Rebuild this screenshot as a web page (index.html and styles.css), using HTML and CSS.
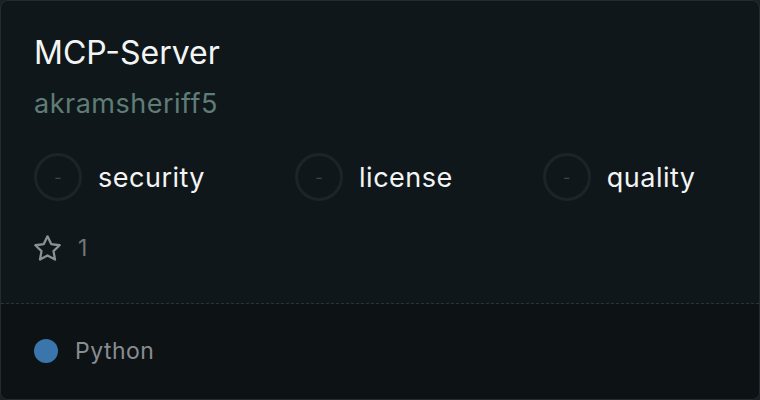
FILE: index.html
```html
<!DOCTYPE html>
<html>
<head>
<meta charset="utf-8">
<link rel="stylesheet" href="styles.css">
</head>
<body>
<div class="card">
  <div class="main">
    <div class="title">MCP-Server</div>
    <div class="owner">akramsheriff5</div>
    <div class="scores">
      <div class="score"><span class="ring">-</span><span class="label">security</span></div>
      <div class="score"><span class="ring">-</span><span class="label">license</span></div>
      <div class="score"><span class="ring">-</span><span class="label">quality</span></div>
    </div>
    <div class="stars">
      <svg class="star" width="27" height="27" viewBox="2 2 20 20" fill="none" stroke="currentColor" stroke-width="1.7" stroke-linejoin="round"><path d="M12 3l2.75 5.75 6.25.85-4.55 4.35 1.1 6.25L12 17.2l-5.55 3 1.1-6.25L3 9.6l6.25-.85z"/></svg>
      <span class="count">1</span>
    </div>
  </div>
  <div class="footer">
    <span class="dot"></span><span class="lang">Python</span>
  </div>
</div>
</body>
</html>
```
FILE: styles.css
```css
html, body {
  margin: 0;
  padding: 0;
  background: #1b2225;
}
body {
  font-family: Inter, "Noto Sans", sans-serif;
  width: 760px;
  height: 400px;
}
.card {
  box-sizing: border-box;
  width: 760px;
  height: 400px;
  border: 1px solid #252c2f;
  border-radius: 8px;
  background: #10171a;
  overflow: hidden;
  display: flex;
  flex-direction: column;
}
.main {
  padding: 32px 33px 0;
  height: 270px;
  border-bottom: 1px dashed #2c3336;
}
.title {
  color: #f3f5f5;
  font-size: 32px;
  line-height: 40px;
}
.owner {
  color: #5e7d76;
  font-size: 27px;
  line-height: 32px;
  letter-spacing: 0.5px;
  margin-top: 15px;
}
.scores {
  display: flex;
  gap: 90px;
  margin-top: 33px;
  align-items: center;
}
.score {
  display: flex;
  align-items: center;
  gap: 16px;
}
.ring {
  box-sizing: border-box;
  width: 48px;
  height: 48px;
  border: 3px solid #1d2427;
  border-radius: 50%;
  display: flex;
  align-items: center;
  justify-content: center;
  color: #3d4446;
  font-size: 16px;
}
.label {
  color: #f3f5f5;
  font-size: 27px;
  letter-spacing: 0.5px;
}
.stars {
  display: flex;
  align-items: center;
  gap: 17px;
  margin-top: 33px;
  color: #8a9094;
}
.star { display: block; }
.count {
  font-size: 23px;
  color: #6f7679;
}
.footer {
  flex: 1;
  background: #0d1215;
  display: flex;
  align-items: center;
  padding: 0 33px 2px;
  gap: 17px;
}
.dot {
  width: 24px;
  height: 24px;
  border-radius: 50%;
  background: #3a76ab;
}
.lang {
  color: #878d91;
  font-size: 23px;
  letter-spacing: 0.5px;
}
```
